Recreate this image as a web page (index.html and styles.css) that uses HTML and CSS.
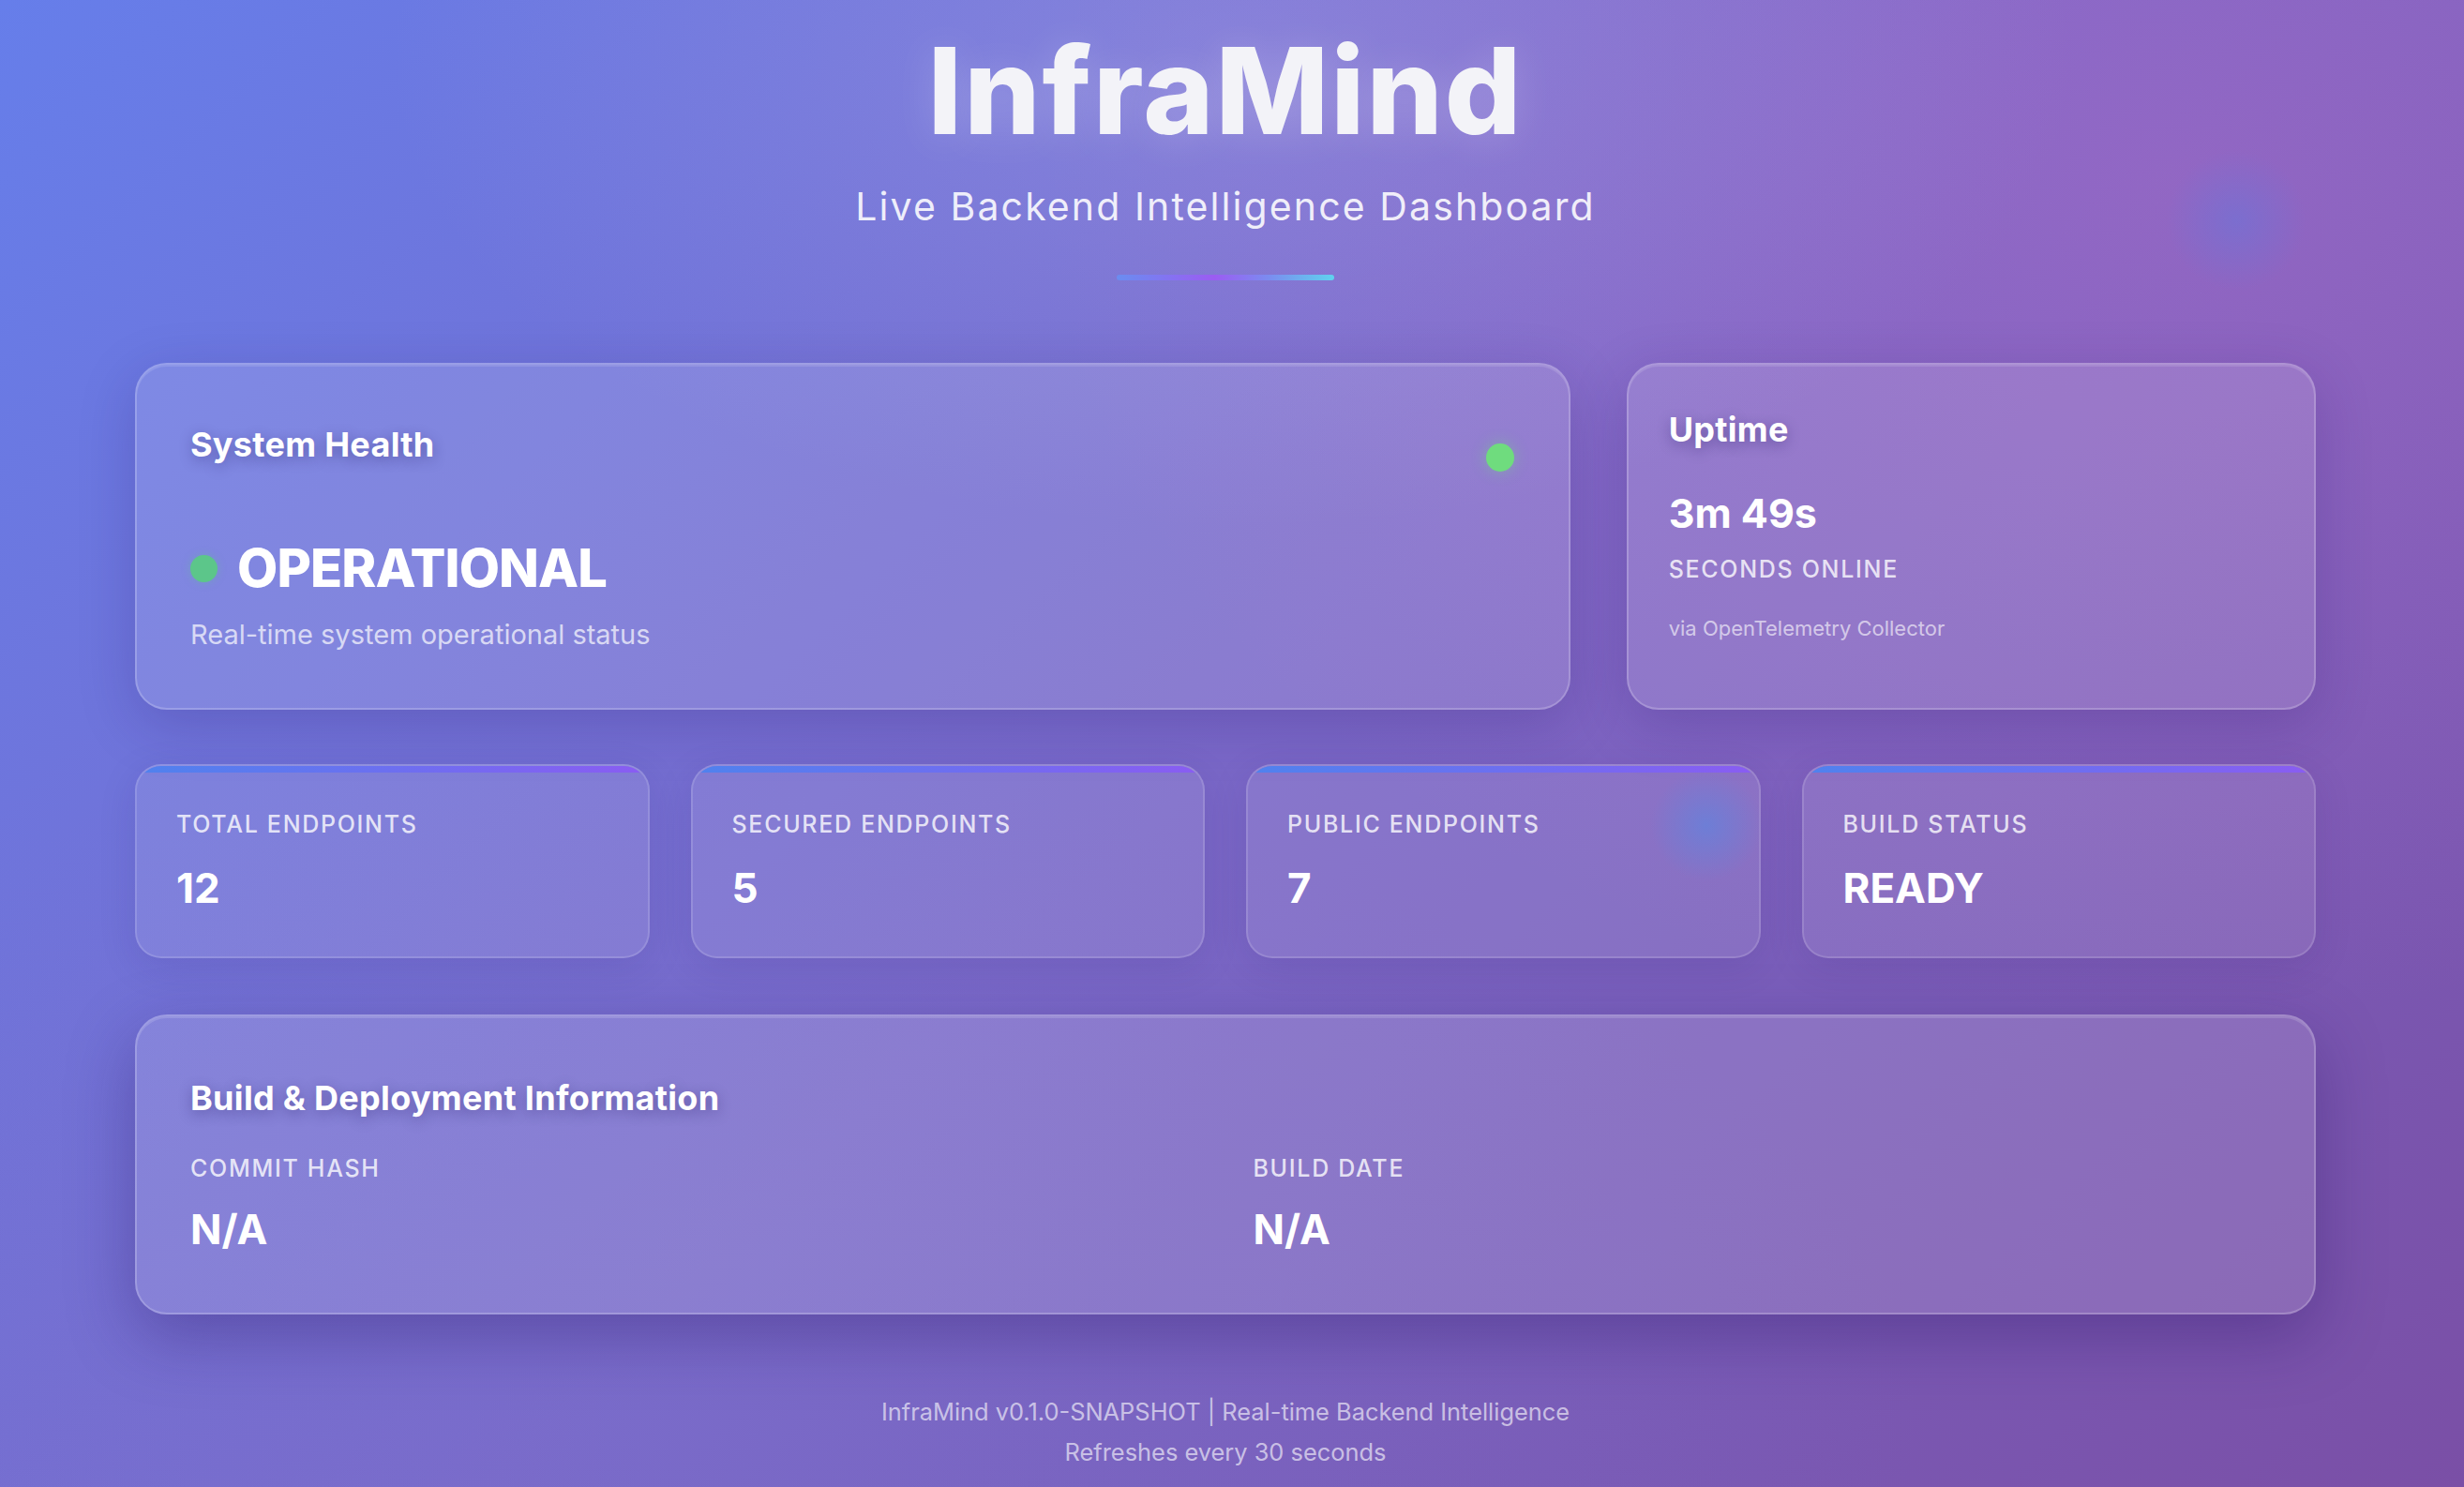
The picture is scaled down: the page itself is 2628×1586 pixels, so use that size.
FILE: index.html
```html
<!DOCTYPE html>
<html lang="en">
<head>
<meta charset="utf-8">
<title>InfraMind</title>
<link rel="stylesheet" href="styles.css">
</head>
<body>
<div class="orb orb-a"></div>
<div class="orb orb-b"></div>
<div class="container">
  <header class="hero">
    <h1 class="brand">InfraMind</h1>
    <p class="tagline">Live Backend Intelligence Dashboard</p>
    <div class="divider"></div>
  </header>

  <section class="top-grid">
    <article class="card health">
      <div class="card-head">
        <h2 class="card-title">System Health</h2>
        <span class="live-dot"></span>
      </div>
      <div class="status-row">
        <span class="status-dot"></span>
        <span class="status-text">OPERATIONAL</span>
      </div>
      <p class="status-note">Real-time system operational status</p>
    </article>
    <article class="card uptime">
      <h2 class="card-title">Uptime</h2>
      <div class="uptime-value">3m 49s</div>
      <div class="label uptime-label">SECONDS ONLINE</div>
      <div class="source">via OpenTelemetry Collector</div>
    </article>
  </section>

  <section class="stats">
    <div class="stat">
      <div class="label">TOTAL ENDPOINTS</div>
      <div class="value">12</div>
    </div>
    <div class="stat">
      <div class="label">SECURED ENDPOINTS</div>
      <div class="value">5</div>
    </div>
    <div class="stat">
      <div class="label">PUBLIC ENDPOINTS</div>
      <div class="value">7</div>
    </div>
    <div class="stat">
      <div class="label">BUILD STATUS</div>
      <div class="value">READY</div>
    </div>
  </section>

  <section class="card build">
    <h2 class="card-title">Build &amp; Deployment Information</h2>
    <div class="build-grid">
      <div class="build-item">
        <div class="label">COMMIT HASH</div>
        <div class="value build-value">N/A</div>
      </div>
      <div class="build-item">
        <div class="label">BUILD DATE</div>
        <div class="value build-value">N/A</div>
      </div>
    </div>
  </section>

  <footer class="footer">
    <p>InfraMind v0.1.0-SNAPSHOT | Real-time Backend Intelligence</p>
    <p>Refreshes every 30 seconds</p>
  </footer>
</div>
</body>
</html>
```

FILE: styles.css
```css
* {
  box-sizing: border-box;
}

html, body {
  margin: 0;
  padding: 0;
}

body {
  font-family: Inter, "Noto Sans", "Liberation Sans", sans-serif;
  line-height: 1.6;
  color: #ffffff;
  min-height: 100vh;
  padding-right: 14px;
  position: relative;
  overflow: hidden;
  background:
    radial-gradient(ellipse 900px 500px at 50% 4%, rgba(170, 165, 230, 0.35) 0%, rgba(170, 165, 230, 0) 100%),
    radial-gradient(ellipse 1200px 900px at 88% 12%, rgba(190, 110, 200, 0.35) 0%, rgba(190, 110, 200, 0) 100%),
    radial-gradient(ellipse 1400px 700px at 25% 95%, rgba(120, 119, 210, 0.25) 0%, rgba(120, 119, 210, 0) 100%),
    linear-gradient(135deg, #667eea 0%, #7a68c8 50%, #7a4fa6 100%);
}

.orb {
  position: absolute;
  border-radius: 50%;
  pointer-events: none;
}

.orb-a {
  left: 2310px;
  top: 160px;
  width: 150px;
  height: 150px;
  background: radial-gradient(circle, rgba(110, 115, 215, 0.6) 0%, rgba(110, 115, 215, 0) 70%);
}

.orb-b {
  left: 1760px;
  top: 820px;
  width: 120px;
  height: 120px;
  background: radial-gradient(circle, rgba(100, 130, 220, 0.75) 0%, rgba(100, 130, 220, 0) 70%);
  z-index: 2;
}

.container {
  width: 2326px;
  margin: 0 auto;
  position: relative;
  z-index: 1;
}

/* Header */
.hero {
  text-align: center;
  padding-top: 20px;
}

.brand {
  margin: 0;
  font-size: 128px;
  line-height: 1.2;
  font-weight: 800;
  letter-spacing: 2px;
  color: #f3f3f8;
  text-shadow: 0 4px 40px rgba(255, 255, 255, 0.18);
}

.tagline {
  margin: 14px 0 0;
  font-size: 41px;
  font-weight: 400;
  letter-spacing: 2.1px;
  color: rgba(255, 255, 255, 0.88);
}

.divider {
  width: 232px;
  height: 6px;
  margin: 40px auto 0;
  border-radius: 3px;
  background: linear-gradient(90deg, #6a8df0 0%, #9b5cf2 45%, #7b8cf0 70%, #5fd3ee 100%);
}

/* Cards */
.card {
  background: rgba(255, 255, 255, 0.13);
  border: 2px solid rgba(255, 255, 255, 0.2);
  border-radius: 34px;
  box-shadow: 0 16px 60px rgba(40, 25, 110, 0.22), inset 0 2px 0 rgba(255, 255, 255, 0.12);
}

.top-grid {
  display: grid;
  grid-template-columns: repeat(3, 1fr);
  gap: 60px;
  margin-top: 88px;
}

.health {
  grid-column: span 2;
  padding: 58px 58px 55px 57px;
}

.uptime {
  padding: 42px 44px 42px 43px;
}

.card-title {
  margin: 0;
  font-size: 36px;
  font-weight: 700;
  line-height: 1.5;
  letter-spacing: 0.3px;
  color: #ffffff;
  text-shadow: 0 4px 14px rgba(30, 20, 90, 0.35);
}

.card-head {
  display: flex;
  justify-content: space-between;
  align-items: flex-start;
}

.live-dot {
  width: 30px;
  height: 30px;
  margin-top: 26px;
  border-radius: 50%;
  background: #6fdc7e;
  box-shadow: 0 0 16px rgba(111, 220, 126, 0.45);
}

.status-row {
  display: flex;
  align-items: center;
  gap: 21px;
  margin-top: 59px;
}

.status-dot {
  width: 29px;
  height: 29px;
  border-radius: 50%;
  background: #5cc68a;
  box-shadow: 0 0 10px rgba(92, 198, 138, 0.35);
}

.status-text {
  font-size: 56px;
  font-weight: 800;
  line-height: 1.6;
  letter-spacing: -0.9px;
  color: #ffffff;
}

.status-note {
  margin: 2px 0 0;
  font-size: 29px;
  color: rgba(255, 255, 255, 0.7);
}

.uptime-value {
  margin-top: 37px;
  font-size: 43px;
  font-weight: 700;
  line-height: 1.2;
  color: #ffffff;
}

.label {
  font-size: 25px;
  font-weight: 500;
  letter-spacing: 1.7px;
  text-transform: uppercase;
  color: rgba(255, 255, 255, 0.8);
}

.uptime-label {
  margin-top: 13px;
}

.source {
  margin-top: 26px;
  font-size: 22px;
  color: rgba(255, 255, 255, 0.62);
}

/* Stats */
.stats {
  display: grid;
  grid-template-columns: repeat(4, 1fr);
  gap: 44px;
  margin-top: 58px;
}

.stat {
  position: relative;
  overflow: hidden;
  padding: 42px 42px 46px;
  border-radius: 28px;
  background: rgba(255, 255, 255, 0.1);
  border: 2px solid rgba(255, 255, 255, 0.14);
  box-shadow: 0 10px 40px rgba(40, 25, 110, 0.12);
}

.stat::before {
  content: "";
  position: absolute;
  left: 0;
  right: 0;
  top: 0;
  height: 7px;
  background: linear-gradient(90deg, #4f82ee 0%, #8a5cf2 100%);
}

.value {
  margin-top: 22px;
  font-size: 44px;
  font-weight: 700;
  line-height: 1.2;
  color: #ffffff;
}

/* Build */
.build {
  margin-top: 60px;
  padding: 60px 58px 62px 57px;
  box-shadow: 0 24px 70px rgba(40, 20, 100, 0.35), inset 0 2px 0 rgba(255, 255, 255, 0.14);
}

.build-grid {
  display: grid;
  grid-template-columns: 1fr 1fr;
  gap: 60px;
  margin-top: 28px;
}

.build-value {
  margin-top: 19px;
}

/* Footer */
.footer {
  margin-top: 82px;
  text-align: center;
  font-size: 25.4px;
  line-height: 1.72;
  color: rgba(255, 255, 255, 0.62);
}

.footer p {
  margin: 0;
}
```
